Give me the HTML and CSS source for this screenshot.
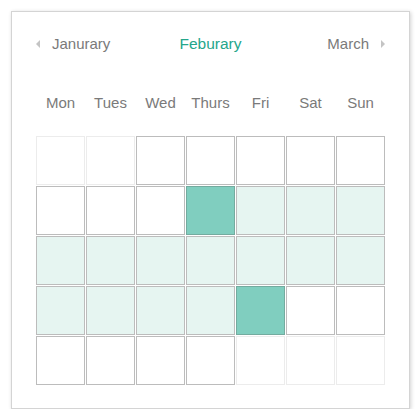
FILE: index.html
```html
<!DOCTYPE html>
<html>
<head>
<meta charset="utf-8">
<link rel="stylesheet" href="styles.css">
</head>
<body>
<div class="card">
  <div class="header">
    <div class="nav nav-prev"><span class="arrow arrow-left"></span><span>Janurary</span></div>
    <div class="current">Feburary</div>
    <div class="nav nav-next"><span>March</span><span class="arrow arrow-right"></span></div>
  </div>
  <div class="weekdays">
    <div>Mon</div><div>Tues</div><div>Wed</div><div>Thurs</div><div>Fri</div><div>Sat</div><div>Sun</div>
  </div>
  <div class="grid">
    <div class="cell empty"></div><div class="cell empty"></div><div class="cell"></div><div class="cell"></div><div class="cell"></div><div class="cell"></div><div class="cell"></div>
    <div class="cell"></div><div class="cell"></div><div class="cell"></div><div class="cell selected"></div><div class="cell range"></div><div class="cell range"></div><div class="cell range"></div>
    <div class="cell range"></div><div class="cell range"></div><div class="cell range"></div><div class="cell range"></div><div class="cell range"></div><div class="cell range"></div><div class="cell range"></div>
    <div class="cell range"></div><div class="cell range"></div><div class="cell range"></div><div class="cell range"></div><div class="cell selected"></div><div class="cell"></div><div class="cell"></div>
    <div class="cell"></div><div class="cell"></div><div class="cell"></div><div class="cell"></div><div class="cell empty"></div><div class="cell empty"></div><div class="cell empty"></div>
  </div>
</div>
</body>
</html>
```
FILE: styles.css
```css
html, body {
  margin: 0;
  padding: 0;
  background: #ffffff;
}
body {
  padding: 11px 0 0 11px;
  font-family: "Liberation Sans", Arial, Helvetica, sans-serif;
}
.card {
  box-sizing: border-box;
  width: 399px;
  height: 398px;
  border: 1px solid #d4d4d4;
  box-shadow: 1px 1px 4px rgba(0, 0, 0, 0.18);
  background: #fff;
  padding: 22px 24px 23px 24px;
}
.header {
  display: grid;
  grid-template-columns: 1fr auto 1fr;
  align-items: center;
  height: 20px;
  line-height: 20px;
  font-size: 15px;
  color: #7a7a7a;
}
.nav {
  display: flex;
  align-items: center;
  gap: 12px;
}
.nav-next {
  justify-self: end;
}
.current {
  color: #25a68b;
  font-size: 15.5px;
}
.arrow {
  width: 0;
  height: 0;
  border-top: 4px solid transparent;
  border-bottom: 4px solid transparent;
  margin-top: -1px;
}
.arrow-left {
  border-right: 4px solid #c4c4c4;
}
.arrow-right {
  border-left: 4px solid #c4c4c4;
}
.weekdays {
  display: grid;
  grid-template-columns: repeat(7, 49px);
  column-gap: 1px;
  margin-top: 39px;
  height: 20px;
  line-height: 20px;
  font-size: 15px;
  color: #7a7a7a;
  text-align: center;
}
.grid {
  display: grid;
  grid-template-columns: repeat(7, 49px);
  grid-auto-rows: 49px;
  gap: 1px;
  margin-top: 23px;
}
.cell {
  box-sizing: border-box;
  border: 1px solid #bcbcbc;
  background: #fff;
}
.cell.empty {
  border-color: #ececec;
}
.cell.range {
  background: #e6f5f1;
}
.cell.selected {
  background: #80cebf;
  border-color: #74ab9f;
}
```
